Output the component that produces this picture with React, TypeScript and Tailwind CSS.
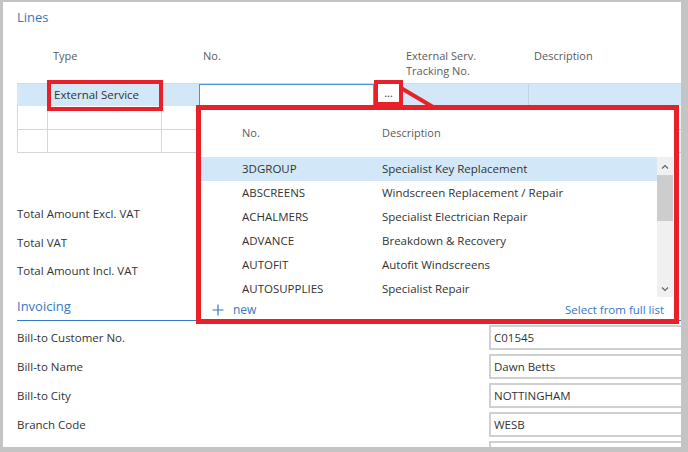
import React from 'react';

const vendors = [
  { no: '3DGROUP', desc: 'Specialist Key Replacement' },
  { no: 'ABSCREENS', desc: 'Windscreen Replacement / Repair' },
  { no: 'ACHALMERS', desc: 'Specialist Electrician Repair' },
  { no: 'ADVANCE', desc: 'Breakdown & Recovery' },
  { no: 'AUTOFIT', desc: 'Autofit Windscreens' },
  { no: 'AUTOSUPPLIES', desc: 'Specialist Repair' },
];

const totals = ['Total Amount Excl. VAT', 'Total VAT', 'Total Amount Incl. VAT'];

const billing = [
  { label: 'Bill-to Customer No.', value: 'C01545' },
  { label: 'Bill-to Name', value: 'Dawn Betts' },
  { label: 'Bill-to City', value: 'NOTTINGHAM' },
  { label: 'Branch Code', value: 'WESB' },
  { label: '', value: '' },
];

const Chevron = ({ up }: { up?: boolean }) => (
  <svg width="8" height="5" viewBox="0 0 8 5" className="text-[#606060]">
    <path d={up ? 'M1 4.5 L4 1.5 L7 4.5' : 'M1 0.5 L4 3.5 L7 0.5'} fill="none" stroke="currentColor" strokeWidth="1.1" />
  </svg>
);

export default function App() {
  return (
    <div
      className="w-[688px] h-[452px] bg-[#c4c4c4] pt-[2px] pl-[3px] pr-[7px] pb-[5px]"
      style={{ fontFamily: '"Open Sans", "Noto Sans", sans-serif' }}
    >
      <div className="relative h-full bg-white overflow-hidden text-[11.5px] text-[#333]">
        <div className="pl-[14px]">
          {/* Lines */}
          <div className="pt-[6px] text-[13px] leading-[18px] text-[#3478c6]">Lines</div>

          <div className="mt-[22px] h-[35px] flex text-[11px] leading-[15px] text-[#5c5c5c]">
            <div className="w-[30px]" />
            <div className="w-[114px] pl-[6px]">Type</div>
            <div className="w-[34px]" />
            <div className="w-[208px] pl-[8px]">No.</div>
            <div className="w-[125px] pl-[3px]">External Serv.<br />Tracking No.</div>
            <div className="flex-1 pl-[6px]">Description</div>
          </div>

          {/* table rows */}
          <div className="flex h-[23px] bg-[#d2e7f7] border-t border-[#c9dcec]">
            <div className="w-[30px]" />
            <div className="w-[114px] pl-[7px] leading-[22px]">External Service</div>
            <div className="w-[34px]" />
            <div className="w-[208px] flex">
              <div className="ml-[4px] w-[175px] h-[22px] bg-white border border-[#4a93d8]" />
            </div>
            <div className="w-[125px]" />
            <div className="flex-1 border-l border-[#c3d3df]" />
          </div>
          {[24, 23].map((h, i) => (
            <div key={i} className="flex border-b border-[#d6d6d6]" style={{ height: h }}>
              <div className="w-[30px] border-l border-[#d6d6d6]" />
              <div className="w-[114px] border-l border-[#d6d6d6]" />
              <div className="flex-1 border-l border-[#d6d6d6]" />
            </div>
          ))}

          {/* totals */}
          <div className="mt-[47px]">
            {totals.map((t) => (
              <div key={t} className="h-[28.5px] leading-[28.5px]">{t}</div>
            ))}
          </div>

          <div className="pt-[11px] pb-[5px] border-b border-[#3478c6] text-[13px] leading-[18px] text-[#3478c6]">Invoicing</div>

          {billing.map((b, i) => (
            <div key={i} className="flex h-[29px] pt-[4px]">
              <div className="w-[472px] shrink-0 leading-[25px]">{b.label}</div>
              <div className="w-[200px] shrink-0 h-[25px] border-2 border-[#d0d0d0] pl-[3px] leading-[21px]">{b.value}</div>
            </div>
          ))}
        </div>

        {/* lookup dropdown */}
        <div className="absolute left-[193px] top-[103px] w-[483px] h-[219px] bg-white border-[5px] border-[#e8202a] flex flex-col">
          <div className="h-[47px] shrink-0 flex items-center text-[11px] text-[#5c5c5c]">
            <div className="w-[181px] pl-[41px]">No.</div>
            <div>Description</div>
          </div>
          <div className="h-[140px] shrink-0 flex overflow-hidden">
            <div className="flex-1">
              {vendors.map((v, i) => (
                <div key={v.no} className={`flex h-[24px] items-center ${i === 0 ? 'bg-[#d2e7f7]' : ''}`}>
                  <div className="w-[181px] pl-[41px]">{v.no}</div>
                  <div>{v.desc}</div>
                </div>
              ))}
            </div>
            <div className="w-[16px] mr-[1px] bg-[#f0f0f0] flex flex-col items-center">
              <div className="h-[18px] flex items-center"><Chevron up /></div>
              <div className="w-full h-[46px] bg-[#cdcdcd]" />
              <div className="flex-1" />
              <div className="h-[16px] flex items-center"><Chevron /></div>
            </div>
          </div>
          <div className="flex-1 flex items-start pt-[5px] pl-[11px] pr-[10px] text-[#3478c6]">
            <div className="flex items-center h-[16px]">
              <svg width="12" height="12" viewBox="0 0 12 12">
                <path d="M6 0.5 V11.5 M0.5 6 H11.5" stroke="#3478c6" strokeWidth="1.2" />
              </svg>
              <span className="ml-[9px] text-[12px] leading-[16px]">new</span>
            </div>
            <div className="ml-auto leading-[16px]">Select from full list</div>
          </div>
        </div>

        {/* annotation boxes */}
        <div className="absolute left-[44px] top-[78px] w-[116px] h-[31px] border-4 border-[#e8202a]" />
        <div className="absolute left-[371px] top-[78px] w-[29px] h-[26px] bg-white border-4 border-[#e8202a] flex items-center justify-center text-[11px] leading-none pb-[2px]">
          ...
        </div>
        <svg className="absolute left-[396px] top-[84px]" width="40" height="24" viewBox="0 0 40 24">
          <path d="M2 2 L34 21" stroke="#e8202a" strokeWidth="4" />
        </svg>
      </div>
    </div>
  );
}
